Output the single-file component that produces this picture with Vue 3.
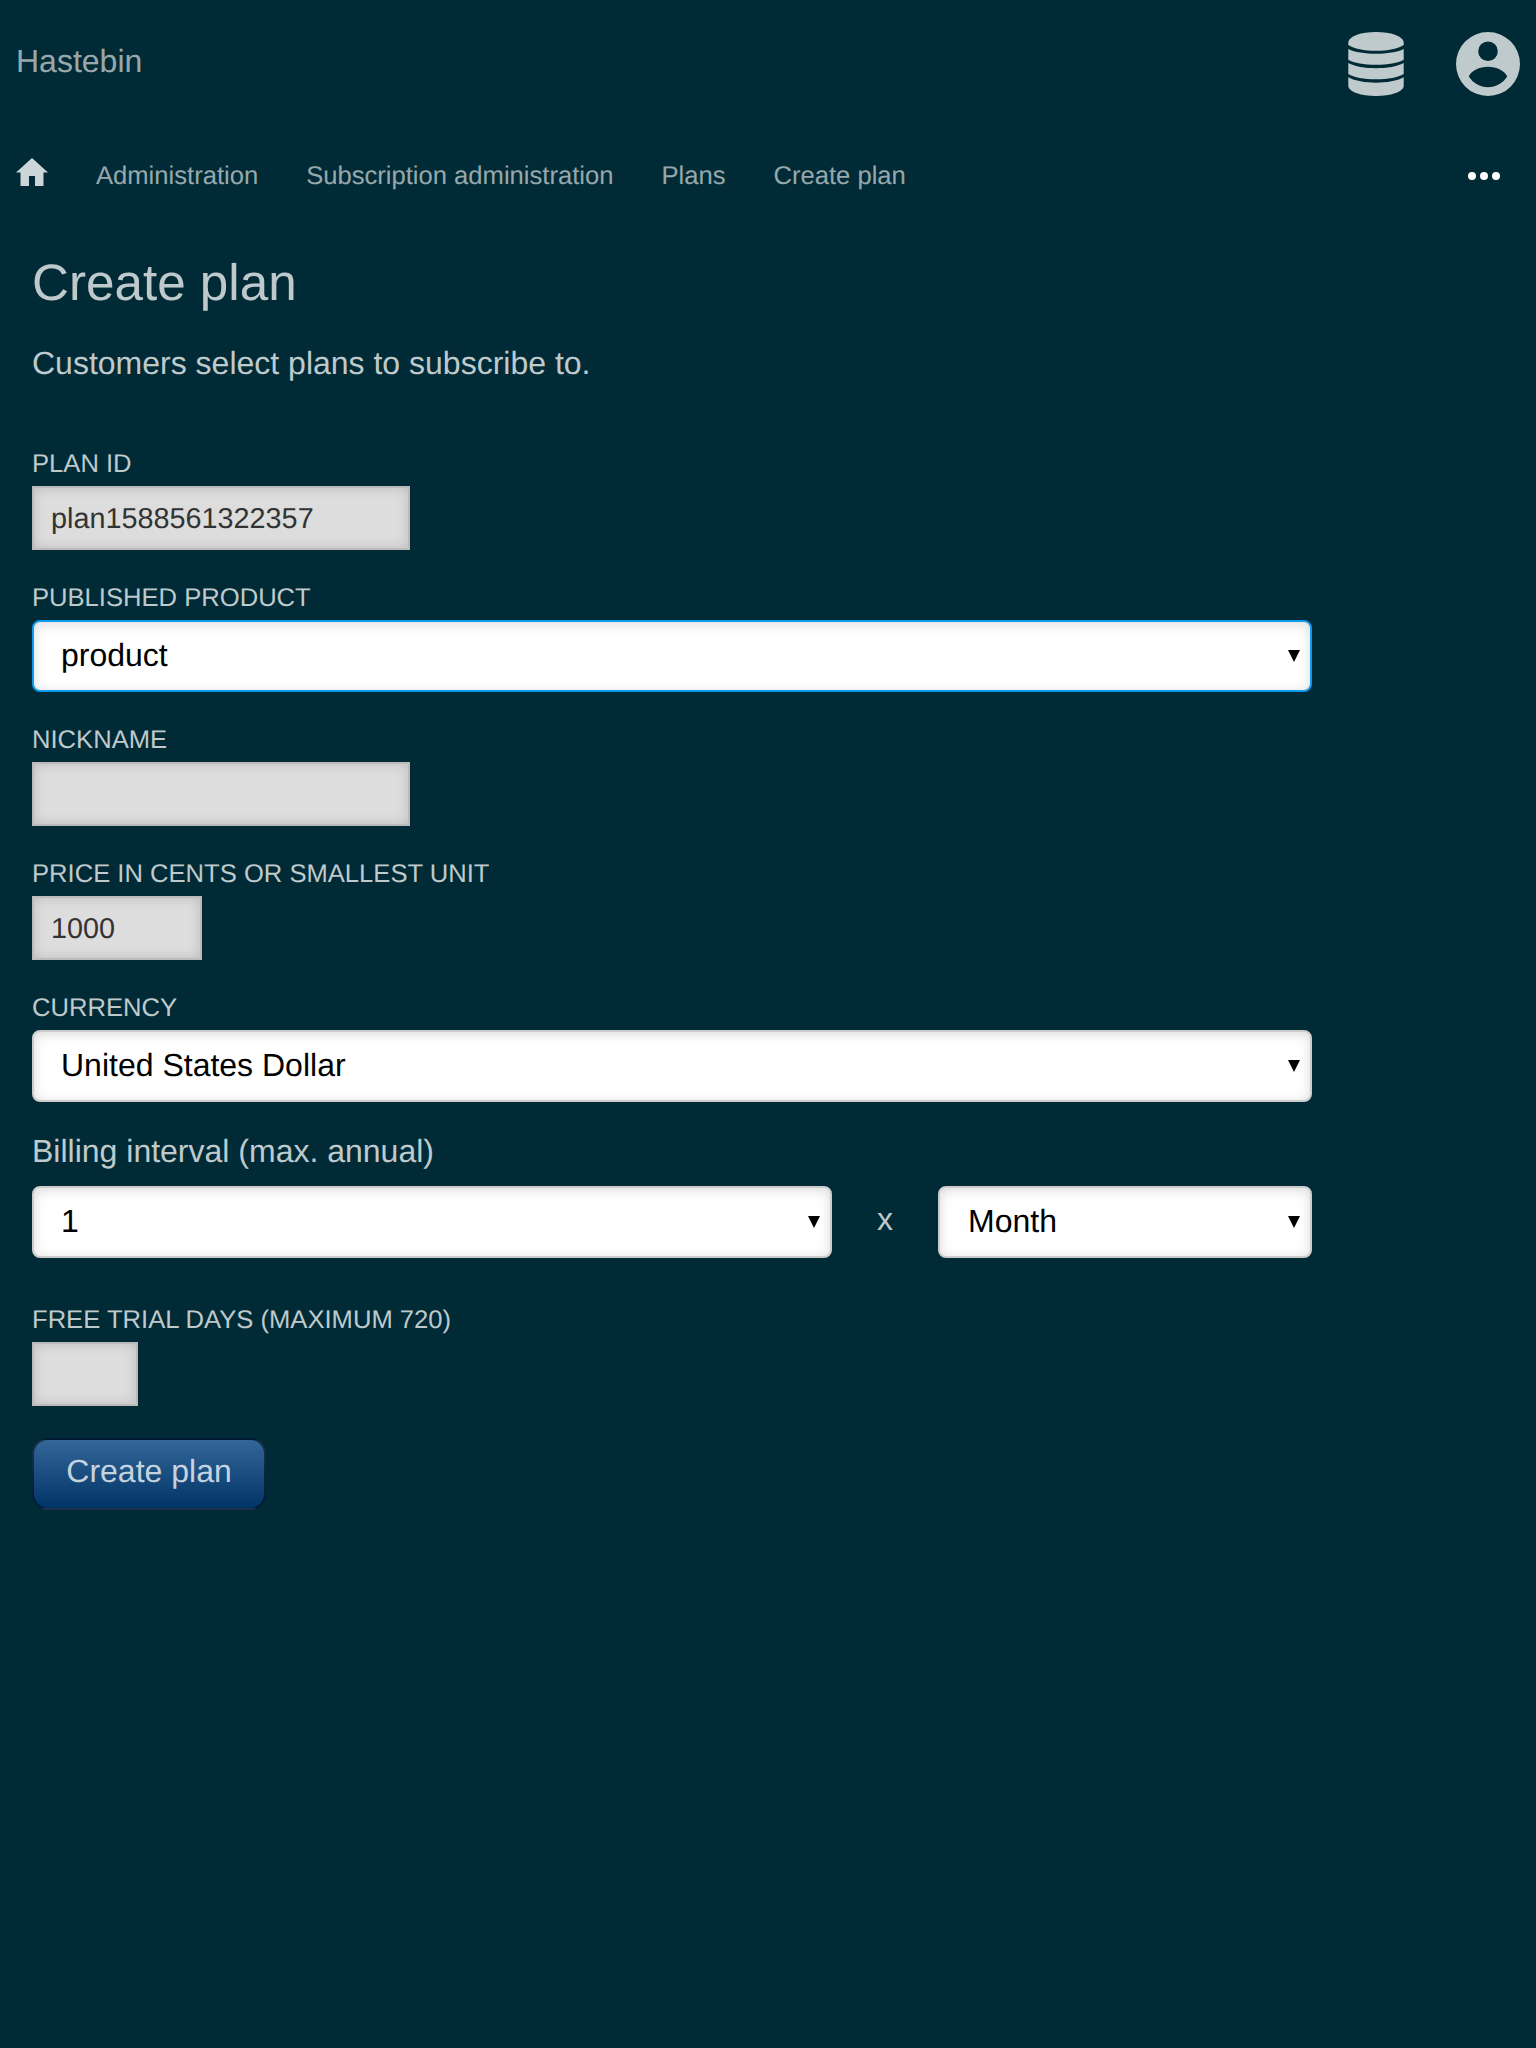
<script setup>
const crumbs = ['Administration', 'Subscription administration', 'Plans', 'Create plan']
</script>

<template>
  <div class="page">
    <header class="header">
      <a class="brand">Hastebin</a>
      <div class="menus">
        <svg class="db" viewBox="0 0 56 64" aria-label="Database">
          <path d="M.3 10C1.500 4 13 0 28 0S54.500 4 55.700 10V13C50 16.800 40 18.800 28 18.800S6 16.800 .3 13Z" />
          <path d="M.3 17C7 20.300 17 21.700 28 21.700s21-1.400 27.700-4.700V27.700C50 31 40 32.800 28 32.800S6 31 .3 27.700Z" />
          <path d="M.3 31C7 34.600 17 36.200 28 36.200s21-1.600 27.700-5.200V42C50 45.400 40 47.300 28 47.300S6 45.400 .3 42Z" />
          <path d="M.3 45.300C7 49 17 50.700 28 50.700s21-1.700 27.700-5.400V54.500C54.500 60 43 64 28 64S1.500 60 .3 54.500Z" />
        </svg>
        <svg class="user" viewBox="0 0 64 64" aria-label="Account">
          <path fill-rule="evenodd" d="M32 0a32 32 0 1 0 0 64a32 32 0 1 0 0-64ZM32 9.400a9.800 9.800 0 1 1 0 19.600a9.800 9.800 0 1 1 0-19.600ZM32 34.800C40.500 34.800 49 39 51.200 44.500C47 51 40 55.200 32 55.200S17 51 12.800 44.500C15 39 23.500 34.800 32 34.800Z" />
        </svg>
      </div>
    </header>

    <nav class="nav">
      <svg class="home" viewBox="0 0 32 28"><path d="M16 0L32 14.500H27.500V28H19V18H13V28H4.500V14.500H0Z" /></svg>
      <a v-for="c in crumbs" :key="c">{{ c }}</a>
      <svg class="dots" viewBox="0 0 32 8"><circle cx="4" cy="4" r="4" /><circle cx="16" cy="4" r="4" /><circle cx="28" cy="4" r="4" /></svg>
    </nav>

    <main class="content">
      <h1>Create plan</h1>
      <p class="intro">Customers select plans to subscribe to.</p>

      <form @submit.prevent>
        <div class="field">
          <label for="planid">PLAN ID</label>
          <input id="planid" class="wide" type="text" value="plan1588561322357" />
        </div>
        <div class="field">
          <label for="product">PUBLISHED PRODUCT</label>
          <div class="select active">
            <select id="product"><option>product</option></select>
            <svg viewBox="0 0 12 12"><path d="M0 0H12L6 12Z" /></svg>
          </div>
        </div>
        <div class="field">
          <label for="nickname">NICKNAME</label>
          <input id="nickname" class="wide" type="text" />
        </div>
        <div class="field">
          <label for="amount">PRICE IN CENTS OR SMALLEST UNIT</label>
          <input id="amount" class="medium" type="text" value="1000" />
        </div>
        <div class="field">
          <label for="currency">CURRENCY</label>
          <div class="select">
            <select id="currency"><option>United States Dollar</option></select>
            <svg viewBox="0 0 12 12"><path d="M0 0H12L6 12Z" /></svg>
          </div>
        </div>
        <div class="billing">
          <div class="caption">Billing interval (max. annual)</div>
          <div class="interval">
            <div class="select count">
              <select><option>1</option></select>
              <svg viewBox="0 0 12 12"><path d="M0 0H12L6 12Z" /></svg>
            </div>
            <span class="times">x</span>
            <div class="select unit">
              <select><option>Month</option></select>
              <svg viewBox="0 0 12 12"><path d="M0 0H12L6 12Z" /></svg>
            </div>
          </div>
        </div>
        <div class="field">
          <label for="trial">FREE TRIAL DAYS (MAXIMUM 720)</label>
          <input id="trial" class="short" type="text" />
        </div>
        <button type="submit">Create plan</button>
      </form>
    </main>
  </div>
</template>

<style>
body {
  background: #002b36;
}
</style>

<style scoped>
.page,
.page * {
  box-sizing: border-box;
}
.page {
  min-height: 2048px;
  background: #002b36;
  color: rgba(255, 255, 255, 0.75);
  font: 32px/36px "Liberation Sans", Arial, sans-serif;
  text-rendering: geometricPrecision;
}
.header {
  display: flex;
  align-items: center;
  justify-content: space-between;
  height: 128px;
  padding: 0 16px;
}
.brand {
  margin-bottom: 6px;
  color: rgba(255, 255, 255, 0.6);
}
.menus {
  display: flex;
  gap: 52px;
  fill: #bfcacd;
}
.db {
  width: 56px;
  height: 64px;
}
.user {
  width: 64px;
  height: 64px;
}
.nav {
  display: flex;
  align-items: center;
  gap: 48px;
  height: 96px;
  padding: 0 36px 0 16px;
  font-size: 25.6px;
  line-height: 30px;
}
.nav a {
  color: rgba(255, 255, 255, 0.6);
}
.home {
  width: 32px;
  height: 28px;
  margin-bottom: 8px;
  fill: #ccd5d7;
}
.dots {
  width: 32px;
  height: 8px;
  margin-left: auto;
  fill: #fff;
}
.content {
  padding: 30px 32px 0;
}
h1 {
  margin: 0;
  font-size: 51.2px;
  font-weight: 400;
  line-height: 58px;
}
.intro {
  margin: 33px 0 68px;
}
.field {
  margin-bottom: 33px;
}
label {
  display: block;
  margin-bottom: 7px;
  font-size: 25.6px;
  line-height: 30px;
}
input {
  display: block;
  height: 64px;
  margin: 0;
  padding: 2px 17px 0;
  border: 2px solid #bbb;
  border-radius: 0;
  outline: 0;
  background: #ddd;
  box-shadow: inset 0 0 12px rgba(0, 0, 0, 0.15);
  color: #333;
  font: 28.8px "Liberation Sans", Arial, sans-serif;
  text-rendering: geometricPrecision;
}
.wide {
  width: 378px;
}
.medium {
  width: 170px;
}
.short {
  width: 106px;
}
.select {
  position: relative;
  width: 1280px;
  height: 72px;
}
select {
  display: block;
  width: 100%;
  height: 100%;
  padding: 0 28px 2px 27px;
  appearance: none;
  border: 2px solid #ccc;
  border-radius: 8px;
  outline: 0;
  background: #fff;
  box-shadow: inset 0 2px 12px rgba(0, 0, 0, 0.15);
  color: #000;
  font: 32px "Liberation Sans", Arial, sans-serif;
  text-rendering: geometricPrecision;
}
.active select {
  border-color: #0e9aef;
}
.select svg {
  position: absolute;
  top: 30px;
  right: 12px;
  width: 12px;
  height: 12px;
}
.billing {
  margin: -2px 0 47px;
}
.caption {
  margin-bottom: 17px;
}
.interval {
  display: flex;
  width: 1280px;
}
.count {
  width: 800px;
}
.times {
  width: 106px;
  padding-top: 15px;
  text-align: center;
}
.unit {
  width: 374px;
}
.unit select {
  padding-left: 28px;
}
button {
  display: block;
  width: 234px;
  height: 72px;
  margin-top: -1px;
  padding: 0 0 6px;
  border: 2px solid rgba(0, 0, 0, 0.5);
  border-radius: 16px;
  background: linear-gradient(#336699, #003366);
  color: rgba(255, 255, 255, 0.75);
  font: 32px "Liberation Sans", Arial, sans-serif;
  text-rendering: geometricPrecision;
}
</style>
